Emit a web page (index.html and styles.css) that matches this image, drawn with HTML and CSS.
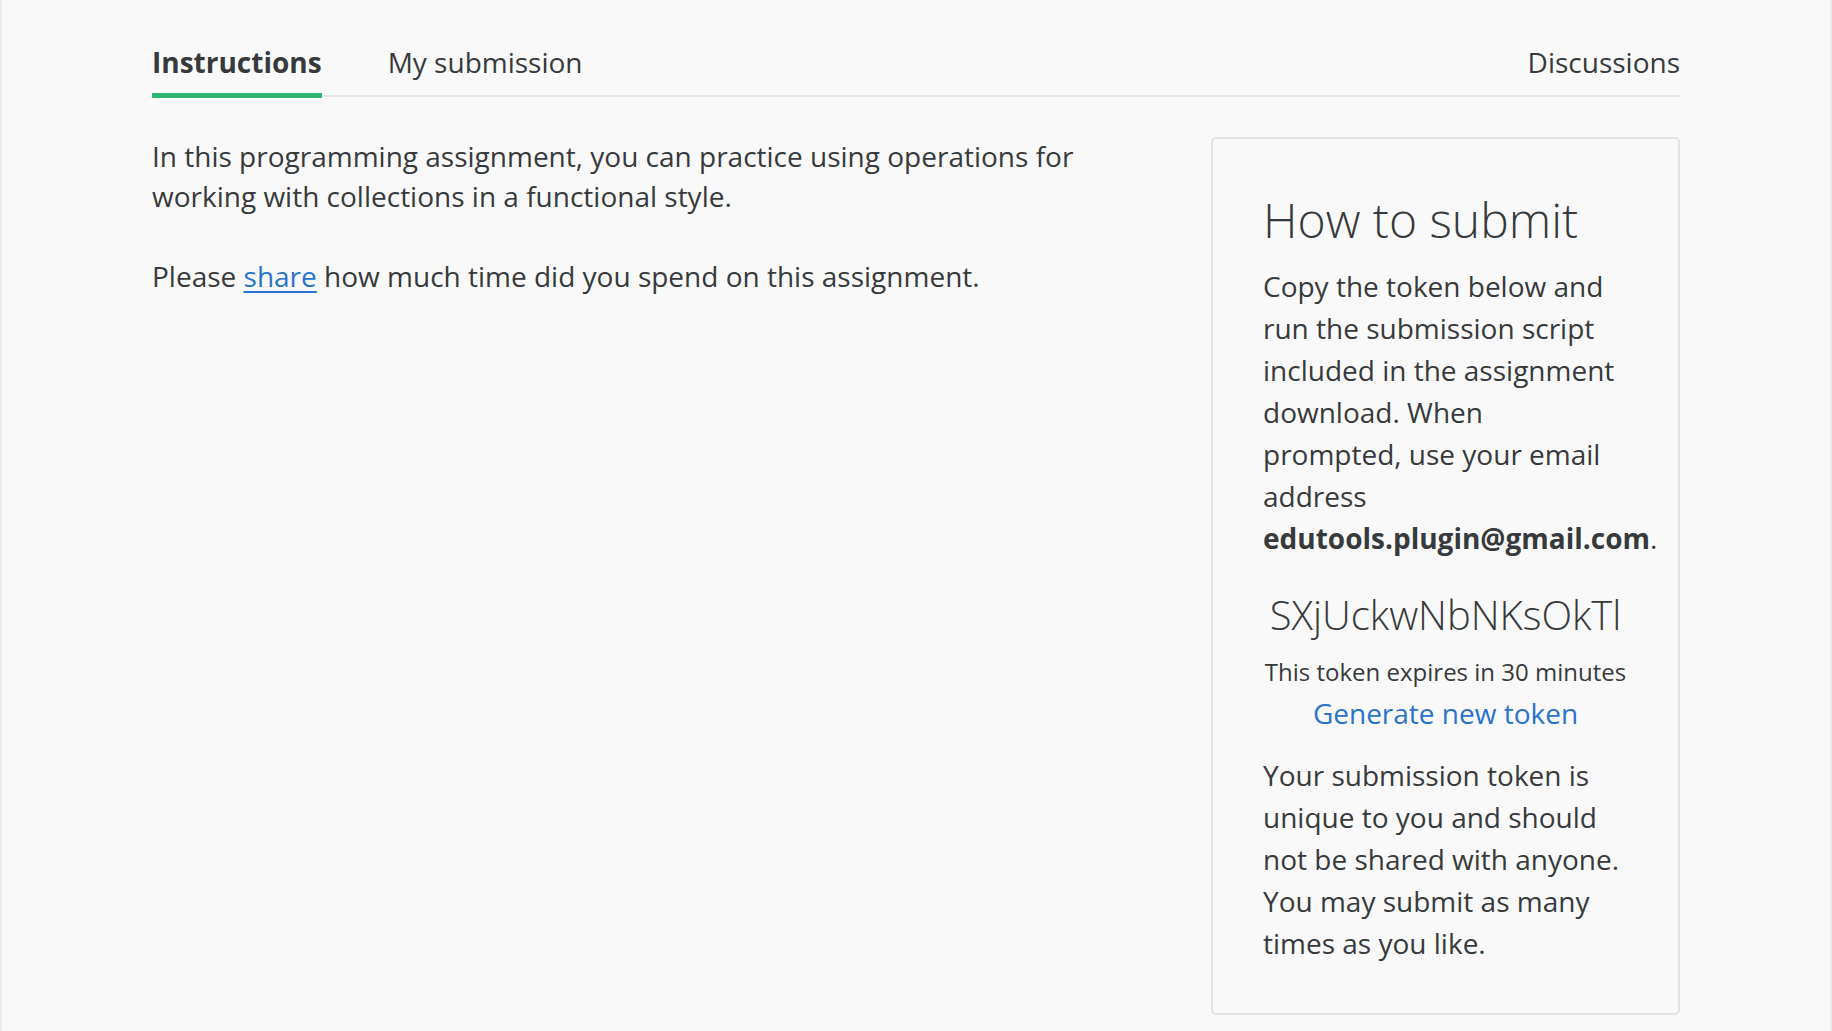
FILE: index.html
```html
<!DOCTYPE html>
<html lang="en">
<head>
<meta charset="utf-8">
<title>Instructions</title>
<link rel="stylesheet" href="styles.css">
</head>
<body>
<div class="frame">
  <div class="page">
    <nav class="tabs">
      <a class="tab active">Instructions</a>
      <a class="tab">My submission</a>
      <span class="spacer"></span>
      <a class="tab">Discussions</a>
    </nav>
    <div class="content">
      <main class="main">
        <p>In this programming assignment, you can practice using operations for working with collections in a functional style.</p>
        <p>Please <a class="link" href="#">share</a> how much time did you spend on this assignment.</p>
      </main>
      <aside class="card">
        <h2 class="card-title">How to submit</h2>
        <p class="card-text">Copy the token below and run the submission script included in the assignment download. When prompted, use your email address <strong>edutools.plugin@gmail.com</strong>.</p>
        <div class="token">SXjUckwNbNKsOkTl</div>
        <div class="expires">This token expires in 30 minutes</div>
        <div class="generate"><a href="#">Generate new token</a></div>
        <p class="card-text last">Your submission token is unique to you and should not be shared with anyone. You may submit as many times as you like.</p>
      </aside>
    </div>
  </div>
</div>
</body>
</html>
```
FILE: styles.css
```css
html, body {
  margin: 0;
  padding: 0;
  height: 100%;
}
body {
  background: #f9f9f9;
  font-family: "Open Sans", "Liberation Sans", sans-serif;
  color: #373a3c;
  overflow: hidden;
}
.frame {
  height: 1031px;
  border-left: 2px solid #ececec;
  border-right: 2px solid #ececec;
  box-sizing: border-box;
}
.page {
  margin-left: 150px;
  width: 1528px;
  padding-top: 40px;
}
.tabs {
  display: flex;
  align-items: flex-end;
  gap: 66px;
  border-bottom: 2px solid #e8e8e8;
  height: 55px;
}
.tab {
  font-size: 28px;
  line-height: 38px;
  color: #373a3c;
  position: relative;
  text-decoration: none;
  height: 54px;
  box-sizing: border-box;
  padding-top: 2px;
}
.tab.active {
  font-weight: 700;
}
.tab.active::after {
  content: "";
  position: absolute;
  left: 0;
  right: 0;
  bottom: -3px;
  height: 5px;
  background: #2eb673;
}
.spacer {
  flex: 1;
}
.content {
  display: flex;
  justify-content: space-between;
  align-items: flex-start;
  margin-top: 40px;
}
.main {
  width: 940px;
  margin-top: -1px;
}
.main p {
  margin: 0 0 40px;
  font-size: 28px;
  line-height: 40px;
}
.link {
  color: #2a73cc;
  text-decoration: underline;
  text-underline-offset: 4px;
}
.card {
  width: 469px;
  box-sizing: border-box;
  border: 2px solid #e3e3e3;
  border-radius: 5px;
  padding: 52px 50px 49px 50px;
}
.card-title {
  margin: 0 0 16px;
  font-size: 48px;
  line-height: 58px;
  font-weight: 300;
}
.card-text {
  margin: 0;
  font-size: 28px;
  line-height: 42px;
}
.card-text strong {
  font-weight: 700;
}
.token {
  margin-top: 32px;
  text-align: center;
  font-size: 40px;
  line-height: 48px;
  font-weight: 300;
  margin-left: -20px;
  margin-right: -20px;
}
.expires {
  margin-top: 17px;
  text-align: center;
  font-size: 24px;
  line-height: 32px;
  margin-left: -20px;
  margin-right: -20px;
}
.generate {
  margin-top: 6px;
  text-align: center;
  font-size: 28px;
  line-height: 38px;
}
.generate a {
  color: #2a73cc;
  text-decoration: none;
}
.card-text.last {
  margin-top: 22px;
}
```
